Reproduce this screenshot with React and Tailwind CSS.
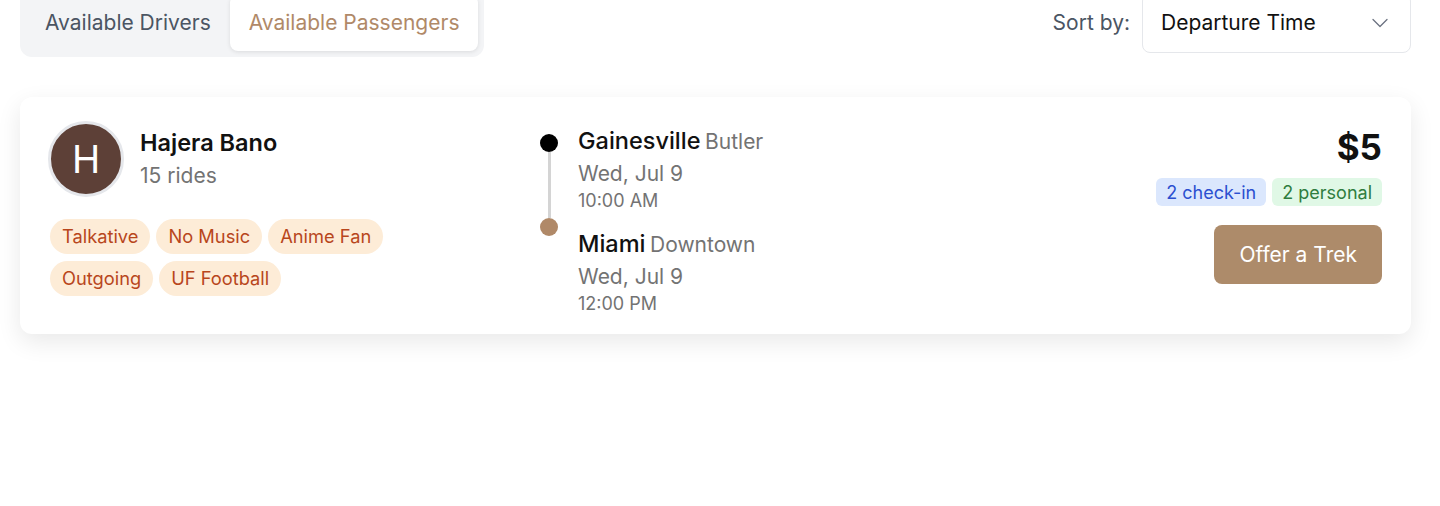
import React, { useState } from "react";
import { ChevronDown } from "lucide-react";

const tags = ["Talkative", "No Music", "Anime Fan", "Outgoing", "UF Football"];

const stops = [
  { city: "Gainesville", area: "Butler", date: "Wed, Jul 9", time: "10:00 AM" },
  { city: "Miami", area: "Downtown", date: "Wed, Jul 9", time: "12:00 PM" },
];

const App = () => {
  const [tab, setTab] = useState("passengers");

  return (
    <div className="min-h-screen bg-white font-['Inter',sans-serif] pl-5 pr-[29px]">
      <div className="-mt-[11px] flex items-center justify-between">
        <div className="flex rounded-xl bg-[#f3f4f6] p-1.5">
          <button
            onClick={() => setTab("drivers")}
            className={`h-14 rounded-lg px-[19px] text-[21px] ${
              tab === "drivers" ? "bg-white text-[#b08968] shadow-sm" : "text-[#4b5563]"
            }`}
          >
            Available Drivers
          </button>
          <button
            onClick={() => setTab("passengers")}
            className={`h-14 rounded-lg px-[19px] text-[21px] ${
              tab === "passengers" ? "bg-white text-[#b08968] shadow-[0_1px_4px_rgba(0,0,0,0.1)]" : "text-[#4b5563]"
            }`}
          >
            Available Passengers
          </button>
        </div>

        <div className="flex items-center gap-3">
          <span className="text-[21px] text-[#4b5563]">Sort by:</span>
          <div className="flex h-[60px] w-[269px] items-center justify-between rounded-lg border border-[#e5e7eb] bg-white pl-[18px] pr-4">
            <span className="text-[21px] text-[#111]">Departure Time</span>
            <ChevronDown size={28} strokeWidth={1.1} className="text-[#6b7280]" />
          </div>
        </div>
      </div>

      <div className="mt-10 flex items-start rounded-xl bg-white pt-6 pb-[18px] pl-7 pr-[29px] shadow-[0_8px_24px_rgba(0,0,0,0.09)]">
        {/* rider */}
        <div className="w-[492px] shrink-0">
          <div className="flex items-center gap-4">
            <div className="flex h-[76px] w-[76px] items-center justify-center rounded-full border-[3px] border-[#e5e7eb] bg-[#5d4037] text-[38px] text-white">
              H
            </div>
            <div>
              <div className="text-[23.5px] font-semibold leading-7 text-[#111]">Hajera Bano</div>
              <div className="mt-[5px] text-[21px] leading-7 text-[#737373]">15 rides</div>
            </div>
          </div>
          <div className="mt-[22px] ml-0.5 flex max-w-[380px] flex-wrap gap-x-1.5 gap-y-[7px]">
            {tags.map((t) => (
              <span
                key={t}
                className="flex h-[35px] items-center rounded-full bg-[#fdecd7] px-3 text-[18.3px] text-[#b8461c]"
              >
                {t}
              </span>
            ))}
          </div>
        </div>

        {/* route */}
        <div className="mt-1.5 flex flex-1 gap-5">
          <div className="mt-[7px] flex flex-col items-center">
            <span className="h-[18px] w-[18px] rounded-full bg-black" />
            <span className="h-[66px] w-[3px] bg-[#d4d4d4]" />
            <span className="h-[18px] w-[18px] rounded-full bg-[#b08968]" />
          </div>
          <div className="flex flex-col gap-[17px]">
            {stops.map((s) => (
              <div key={s.city}>
                <div className="leading-7">
                  <span className="text-[23.5px] font-medium text-[#111]">{s.city}</span>{" "}
                  <span className="text-[21px] text-[#737373]">{s.area}</span>
                </div>
                <div className="mt-[3px] text-[21px] leading-7 text-[#737373]">{s.date}</div>
                <div className="mt-px text-[18px] leading-6 text-[#737373]">{s.time}</div>
              </div>
            ))}
          </div>
        </div>

        {/* price */}
        <div className="mt-1.5 flex flex-col items-end">
          <div className="text-[35px] font-bold leading-10 text-[#111]">$5</div>
          <div className="mt-[11px] flex gap-1.5">
            <span className="flex h-7 items-center rounded-md bg-[#dbe7fd] px-2.5 text-[18px] text-[#2b4fd0]">
              2 check-in
            </span>
            <span className="flex h-7 items-center rounded-md bg-[#e0f8e6] px-2.5 text-[18px] text-[#2f7d3e]">
              2 personal
            </span>
          </div>
          <button className="mt-[19px] h-[59px] rounded-lg bg-[#ad8b6a] px-[25px] text-[21px] text-white">
            Offer a Trek
          </button>
        </div>
      </div>
    </div>
  );
};

export default App;
